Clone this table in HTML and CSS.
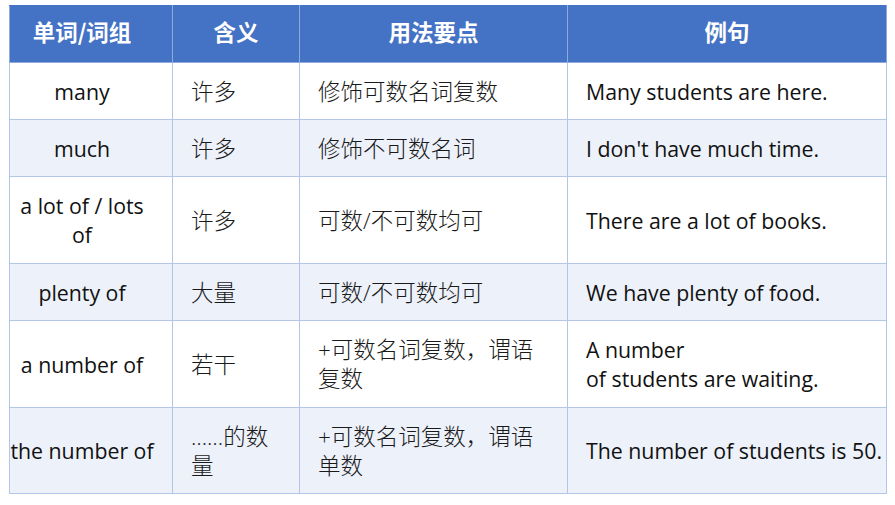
FILE: index.html
```html
<!DOCTYPE html>
<html lang="zh">
<head>
<meta charset="utf-8">
<link rel="stylesheet" href="styles.css">
</head>
<body>
<div class="page">
<table class="grid">
  <colgroup>
    <col class="c1"><col class="c2"><col class="c3"><col class="c4">
  </colgroup>
  <thead>
    <tr class="head h57">
      <th class="first">单词/词组</th><th>含义</th><th>用法要点</th><th>例句</th>
    </tr>
  </thead>
  <tbody>
    <tr class="h57"><td class="word">many</td><td class="zh">许多</td><td class="zh">修饰可数名词复数</td><td class="en">Many students are here.</td></tr>
    <tr class="alt h57"><td class="word">much</td><td class="zh">许多</td><td class="zh">修饰不可数名词</td><td class="en">I don't have much time.</td></tr>
    <tr class="h87"><td class="word">a lot of / lots of</td><td class="zh">许多</td><td class="zh">可数/不可数均可</td><td class="en">There are a lot of books.</td></tr>
    <tr class="alt h57"><td class="word">plenty of</td><td class="zh">大量</td><td class="zh">可数/不可数均可</td><td class="en">We have plenty of food.</td></tr>
    <tr class="h87"><td class="word">a number of</td><td class="zh">若干</td><td class="zh">+可数名词复数，谓语复数</td><td class="en">A number<br>of students are waiting.</td></tr>
    <tr class="alt h86"><td class="word">the number of</td><td class="zh">……的数量</td><td class="zh">+可数名词复数，谓语单数</td><td class="en">The number of students is 50.</td></tr>
  </tbody>
</table>
</div>
</body>
</html>
```
FILE: styles.css
```css
html, body {
  margin: 0;
  padding: 0;
  background: #ffffff;
}
.page {
  padding: 5px 0 0 9px;
}
.grid {
  border-collapse: collapse;
  table-layout: fixed;
  width: 877px;
  border: 1px solid #5b7fc0;
  font-family: "Open Sans", "Noto Sans CJK SC", sans-serif;
  color: #111111;
}
.c1 { width: 163px; }
.c2 { width: 127px; }
.c3 { width: 268px; }
.c4 { width: 319px; }
.grid th, .grid td {
  border: 1px solid #b4c6e7;
  padding: 0 20px 0 18px;
  vertical-align: middle;
  line-height: 29px;
}
.head th {
  background: #4472c4;
  color: #ffffff;
  font-family: "Noto Sans CJK SC", sans-serif;
  font-weight: 700;
  font-size: 22.5px;
  text-align: center;
  padding: 0 19px 5px 19px;
  border-color: #8eaadb;
  border-top-color: #4472c4;
}
.head th.first {
  padding-left: 0;
  padding-right: 18px;
}
.h57 { height: 57px; }
.h87 { height: 87px; }
.h86 { height: 86px; }
.alt td { background: #edf1fa; }
.word {
  text-align: center;
  font-size: 21.3px;
  padding: 0 18px 0 0 !important;
}
.zh {
  font-family: "Open Sans", "Noto Sans CJK SC", sans-serif;
  font-weight: 300;
  font-size: 22.5px;
  color: #1a1a1a;
}
.en {
  font-size: 21.3px;
  white-space: nowrap;
  padding-right: 0 !important;
}
```
